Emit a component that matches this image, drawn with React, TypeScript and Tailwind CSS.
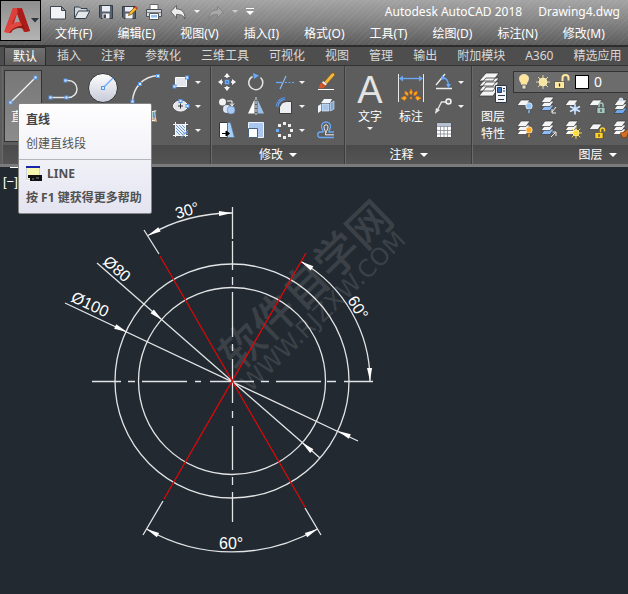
import React from "react";

type Kids = { children?: React.ReactNode };

const BLUE = "#6aa8f8";
const NODE = "#2f63b8";

function Glyph({ children, size = 18 }: Kids & { size?: number }) {
  return (
    <svg width={size} height={size} viewBox={`0 0 ${size} ${size}`} fill="none" className="block shrink-0 overflow-visible" aria-hidden="true">
      {children}
    </svg>
  );
}

function Grip({ x, y }: { x: number; y: number }) {
  return <rect x={x - 1.5} y={y - 1.5} width="3" height="3" fill="#dcecff" stroke="#5596ee" />;
}

function Caret({ wide = false }: { wide?: boolean }) {
  return wide ? (
    <svg width="8" height="4" viewBox="0 0 8 4" className="block shrink-0" aria-hidden="true">
      <path d="M0 0h8L4 4z" fill="#fff" />
    </svg>
  ) : (
    <svg width="6" height="3" viewBox="0 0 6 3" className="block shrink-0" aria-hidden="true">
      <path d="M0 0h6L3 3z" fill="#f2f2f2" />
    </svg>
  );
}

function Tool({ label, children }: Kids & { label: string }) {
  return (
    <button type="button" aria-label={label} className="block size-[18px]">
      <Glyph>{children}</Glyph>
    </button>
  );
}

function DropTool({ label, children }: Kids & { label: string }) {
  return (
    <button type="button" aria-label={label} className="flex h-[18px] w-[30px] items-center gap-[5px]">
      <Glyph>{children}</Glyph>
      <Caret />
    </button>
  );
}

function BigTool({ lines, caret = false, active = false, children }: Kids & { lines: string[]; caret?: boolean; active?: boolean }) {
  return (
    <button
      type="button"
      className={
        active
          ? "flex h-[72px] w-[38px] flex-col items-center border border-[#333] bg-linear-to-b from-[#777] to-[#8c8c8c] pt-[3px]"
          : "flex h-[72px] w-10 flex-col items-center pt-1"
      }
    >
      <Glyph size={32}>{children}</Glyph>
      <span className="mt-[2px] flex flex-col whitespace-nowrap text-center leading-[17px]">
        {lines.map((l) => (
          <span key={l}>{l}</span>
        ))}
      </span>
      {caret && (
        <span className="mt-[2px]">
          <Caret />
        </span>
      )}
    </button>
  );
}

function Panel({ title, width, children }: Kids & { title: string; width: string }) {
  return (
    <section className={`flex shrink-0 flex-col border-r border-[#3c3c3c] border-l border-l-[#6a6a6a] ${width}`}>
      <div className="flex h-[79px]">{children}</div>
      <button
        type="button"
        className="flex h-[19px] items-center justify-center gap-[6px] bg-linear-to-b from-[#4a4a4a] to-[#555] text-white"
      >
        {title}
        <Caret wide />
      </button>
    </section>
  );
}

function Sheets({ n = 3, bottom = "#fff" }: { n?: number; bottom?: string }) {
  const ys = n === 1 ? [3] : [8, 4, 0];
  return (
    <g stroke="#3a3a3a" strokeWidth=".7">
      {ys.map((y, i) => (
        <path key={y} d={`M5 ${y}h9l-4 5.500h-9z`} fill={i === 0 && n === 3 ? bottom : "#f5f5f5"} />
      ))}
    </g>
  );
}

/* Quick access toolbar */
const quick: [string, React.ReactNode][] = [
  ["新建", <path key="a" d="M.5 2.500h11l4 4v8.500h-15zM11.500 2.500v4h4" fill="#f1f3f7" stroke="#3f4650" />],
  [
    "打开",
    <g key="a" stroke="#34404a" strokeLinejoin="round">
      <path d="M.5 14V3h5l1.500 1.500h6V7" fill="#cfd6dc" />
      <path d="M.5 14.500 4.500 7h11.300l-4 7.500z" fill="#e3e8ec" />
    </g>,
  ],
  [
    "保存",
    <g key="a">
      <path d="M1.500 1.500h13v13h-11.500l-1.500-1.500z" fill="#56616f" stroke="#333b45" />
      <path d="M4 2h8v5.500H4z" fill="#e9edf2" />
      <path d="M4.500 9.500h7v5h-7z" fill="#f4f4f4" />
      <path d="M5.500 10.500h2.500v3.500h-2.500z" fill="#3d4652" />
    </g>,
  ],
  [
    "另存为",
    <g key="a">
      <path d="M.5 2.500h13v12h-11.500l-1.500-1.500z" fill="#56616f" stroke="#333b45" />
      <path d="M3 3h8v4.500H3z" fill="#e9edf2" />
      <path d="M3.500 9.500h7v5h-7z" fill="#f4f4f4" />
      <path d="m6.500 11.500 1-3 6-6 2 2-6 6z" fill="#f5b52c" stroke="#7a4a10" strokeWidth=".7" />
      <path d="m12.500 3.500 1.500-1.500 2 2-1.500 1.500z" fill="#d8452b" />
    </g>,
  ],
  [
    "打印",
    <g key="a">
      <path d="M4 .5h8v6H4z" fill="#fff" stroke="#666" />
      <path d="M.5 5.500h15v7h-15z" fill="#d6d9de" stroke="#4c5158" />
      <path d="M1 8.500h14" stroke="#7d838b" />
      <path d="M3.500 9.500h9v6h-9z" fill="#fff" stroke="#555" />
      <path d="M5 11h6v2.500H5z" fill="#8dbdf5" />
    </g>,
  ],
  ["放弃", <path key="a" d="M6.500 1.500v3.500c5 0 8.500 2.500 8.500 10-1.500-3.600-4-4.600-8.500-4.600v3.700L.8 7.800z" fill="#ececec" stroke="#4d4d4d" strokeWidth=".8" />],
];

function QuickBar() {
  return (
    <div className="flex items-center gap-2">
      {quick.map(([label, art]) => (
        <button key={label} type="button" aria-label={label} className="block">
          <Glyph size={16}>{art}</Glyph>
        </button>
      ))}
      <button type="button" aria-label="放弃列表" className="block"><Caret /></button>
      <button type="button" aria-label="重做" className="block">
        <Glyph size={16}>
          <path d="M9.500 2.500v3.300c-5 0-8.500 2.200-8.500 9 1.500-3.600 4-4.300 8.500-4.300v3.200l5.700-5.500z" fill="#a8a8a8" stroke="#7b7b7b" strokeWidth=".8" />
        </Glyph>
      </button>
      <button type="button" aria-label="重做列表" className="opacity-60"><Caret /></button>
      <button type="button" aria-label="自定义" className="flex flex-col gap-[2px]">
        <span className="h-px w-2 bg-white" />
        <Caret wide />
      </button>
    </div>
  );
}

const menus = ["文件(F)", "编辑(E)", "视图(V)", "插入(I)", "格式(O)", "工具(T)", "绘图(D)", "标注(N)", "修改(M)"];
const tabs = ["默认", "插入", "注释", "参数化", "三维工具", "可视化", "视图", "管理", "输出", "附加模块", "A360", "精选应用"];

function TitleArea() {
  return (
    <header className="flex h-[45px] bg-[repeating-linear-gradient(135deg,rgba(255,255,255,0.05)_0px,rgba(255,255,255,0.05)_1px,transparent_1px,transparent_4px),linear-gradient(180deg,#a4a4a4_0%,#8a8a8a_40%,#5b5b5b_100%)]">
      <button
        type="button"
        aria-label="应用程序菜单"
        className="flex h-[41px] w-[41px] shrink-0 items-center gap-px border border-black bg-linear-to-b from-[#8e8e8e] to-[#b4b4b4] pl-[3px]"
      >
        <svg width="26" height="28" viewBox="0 0 26 28" aria-hidden="true">
          <path d="M1 24 9 1h9l8 23-6 1-3-6-7 1-3 6z" fill="#c4231f" />
          <path d="M9 1h7L9 14 5 26l-5-1z" fill="#dd403a" />
          <path d="m13 1 5 1 8 22-5 1-6-12z" fill="#a81d1a" />
          <path d="m13 7-3 9 6-1z" fill="#a0a0a0" />
          <path d="M4 25c3-5 8-7 15-7l2 4c-6-2-11-1-15 4z" fill="#8f1815" />
          <path d="M1 25c3-6 8-10 15-10l2 4c-6 0-9 2-13 7z" fill="#e0483f" />
        </svg>
        <svg width="8" height="5" viewBox="0 0 8 5" aria-hidden="true">
          <path d="M0 0h8L4 4.500z" fill="#2e3640" />
        </svg>
      </button>
      <div className="min-w-0 flex-1">
        <div className="flex h-[23px] items-center justify-between pr-2 pl-[9px]">
          <QuickBar />
          <h1 className="flex gap-4 whitespace-nowrap text-white">
            <span>Autodesk AutoCAD 2018</span>
            <span>Drawing4.dwg</span>
          </h1>
        </div>
        <nav className="flex h-[22px] items-center gap-[25px] overflow-hidden pl-[14px] whitespace-nowrap text-white">
          {menus.map((m) => (
            <button key={m} type="button">{m}</button>
          ))}
        </nav>
      </div>
    </header>
  );
}

function TabStrip() {
  return (
    <div role="tablist" className="flex h-[21px] overflow-hidden border-t-2 border-b border-t-[#2c2c2c] border-b-[#333] bg-[#4e4e4e] pl-1 whitespace-nowrap text-[#d9d9d9]">
      {tabs.map((t, i) => (
        <button
          key={t}
          type="button"
          role="tab"
          aria-selected={i === 0}
          className={
            i === 0
              ? "mr-px rounded-t-xs border border-b-0 border-[#2c2c2c] bg-linear-to-b from-[#707070] to-[#5d5d5d] px-2 text-white"
              : "px-[10px]"
          }
        >
          {t}
        </button>
      ))}
    </div>
  );
}

function DrawPanel() {
  return (
    <Panel title="绘图" width="w-[209px] ml-[2px]">
      <div className="flex gap-px pt-1 pl-px">
        <BigTool lines={["直线"]} active>
          <path d="M4 28 28.500 3.500" stroke="#f4f4f4" strokeWidth="1.300" />
          <Grip x={3.500} y={28.500} />
          <Grip x={28.500} y={3.500} />
        </BigTool>
        <BigTool lines={["多段线"]}>
          <path d="M3 23.500h18.500a8.500 8.500 0 0 0 0-17h-3" stroke="#e4e4e4" strokeWidth="1.500" />
          <Grip x={3.500} y={23.500} />
          <Grip x={19.500} y={23.500} />
          <Grip x={18.500} y={6.500} />
        </BigTool>
        <BigTool lines={["圆"]}>
          <defs>
            <linearGradient id="disc" x2="0" y2="1">
              <stop stopColor="#fff" />
              <stop offset="1" stopColor="#c5cad8" />
            </linearGradient>
          </defs>
          <circle cx="15" cy="14" r="14.500" fill="url(#disc)" stroke="#333" />
          <path d="m15 14 10-10" stroke={BLUE} strokeWidth="1.300" />
          <Grip x={15} y={14} />
        </BigTool>
        <BigTool lines={["圆弧"]}>
          <path d="M3.500 27.500C4 14 14 2 29.500 1.500" stroke="#e4e4e4" strokeWidth="1.500" />
          <Grip x={3.500} y={27.500} />
          <Grip x={11} y={10} />
          <Grip x={29} y={2} />
        </BigTool>
      </div>
      <div className="flex flex-col gap-[6px] pt-[7px] pl-[7px]">
        <DropTool label="矩形">
          <path d="M3.500 4.500h11v9h-11z" fill="#e3e6ea" stroke="#fff" />
          <Grip x={2.500} y={13.500} />
          <Grip x={15} y={4.500} />
        </DropTool>
        <DropTool label="椭圆">
          <ellipse cx="8.500" cy="9" rx="7" ry="5" fill="#e1e4e9" stroke="#fff" />
          <path d="M6 9h5M8.500 6.500v5" stroke="#333" />
          <Grip x={8.500} y={4} />
          <Grip x={15.500} y={9} />
        </DropTool>
        <DropTool label="图案填充">
          <path d="M4 4h10v10H4z" fill="#e6effc" />
          <path d="m4 4 10 10M7 4l7 7M10 4l4 4M4 7l7 7M4 10l4 4" stroke="#7799cc" />
          <path d="M1 3.500h15M1 14.500h15M3.500 1v15M13.500 1v15" stroke="#f5f5f5" />
          <path d="m9 17 7-8M11 12h5" stroke={BLUE} />
        </DropTool>
      </div>
    </Panel>
  );
}

function ModifyPanel() {
  return (
    <Panel title="修改" width="w-[134px]">
      <div className="grid h-min grid-cols-[18px_18px_30px_18px] gap-x-[11px] gap-y-[6px] pt-[7px] pl-[6px]">
        <Tool label="移动">
          <path d="M9 1v4M9 13v4M1 9h4M13 9h4" stroke="#f5f5f5" strokeWidth="1.500" />
          <path d="m9 0 3 4H6zM9 18l3-4H6zM0 9l4-3v6zM18 9l-4-3v6z" fill="#f5f5f5" />
          <path d="M7.500 7.500h3v3h-3z" fill={NODE} stroke={BLUE} strokeWidth="1.500" />
        </Tool>
        <Tool label="旋转">
          <path d="M13.500 4.500a7 7 0 1 1-8-1" stroke="#e6e6e6" strokeWidth="1.500" />
          <path d="m6 0 6 2.500L7 6z" fill={BLUE} />
        </Tool>
        <DropTool label="修剪">
          <path d="M0 9.500h6" stroke={BLUE} strokeWidth="1.300" />
          <path d="M9 9.500h9" stroke={BLUE} strokeDasharray="2 1.500" />
          <path d="M4 16 10 3" stroke="#8bbbf8" strokeWidth="1.200" />
        </DropTool>
        <Tool label="删除">
          <path d="m7 9 8-9h2.500v2.500L10 11z" fill="#f2b93a" stroke="#7b4b13" strokeWidth=".6" />
          <path d="m6 8 4 3-1.500 1.500L5 10z" fill="#eee" />
          <path d="M5 10c-3 0-1.500 3-3.500 5 3 1 6.500 0 7-2.500z" fill="#d3552a" />
          <path d="M1 16.500h16" stroke="#fff" />
        </Tool>
        <Tool label="复制">
          <circle cx="4.500" cy="5" r="3.500" fill="#f2f3f5" />
          <path d="M9 4h5v4M12 6.500 14 9l2-2.500" stroke="#fff" />
          <circle cx="9" cy="12" r="4" fill="#dce6f5" />
          <circle cx="13" cy="13" r="4" fill="#a9c8f2" stroke="#6b88b8" strokeWidth=".6" />
        </Tool>
        <Tool label="镜像">
          <path d="M7.500 2.500v14H1z" fill="#fff" />
          <path d="M10.500 2.500v14H17z" fill="#9cc0e5" />
          <path d="M9 0v18" stroke="#d9e8fb" strokeDasharray="3 1" />
        </Tool>
        <DropTool label="圆角">
          <path d="M3.500 16.500v-6c1-4 4-6 8-6h4v12z" fill="#eceef1" stroke="#3d3d3d" />
          <path d="M1 9.500C2 5 4 2 9 1.500" stroke={BLUE} strokeWidth="2.500" />
          <path d="M1 9.500C2 5 4 2 9 1.500" stroke="#284e8b" strokeWidth=".8" />
        </DropTool>
        <Tool label="分解">
          <path d="m4 6 3-4h8l-2 4zM1 9l3-2v7l-3 2z" fill="#eef5fd" />
          <path d="M5 7h7v7H5z" fill="#a5c4e6" stroke="#dcecff" strokeWidth=".7" />
          <path d="m13.500 6 3.500-2v8l-3.500 2z" fill="#7ba6d8" stroke="#dcecff" strokeWidth=".6" />
        </Tool>
        <Tool label="拉伸">
          <path d="M1.500 1.500h8v15h-8z" fill="#fff" stroke="#383838" />
          <path d="M9.500 1.500h3l4 15h-7z" fill="#a8cdf2" stroke="#506a8e" strokeWidth=".7" />
          <path d="M4 12.500h6M8 10l3.500 2.500L8 15z" stroke="#000" fill="#000" />
        </Tool>
        <Tool label="缩放">
          <path d="M1.500 1.500h15v15h-15z" fill="#a9c7ef" stroke="#eaf3ff" />
          <path d="M1.500 7.500h9v9h-9z" fill="#fff" stroke="#46607f" />
        </Tool>
        <DropTool label="阵列">
          {[[7, 1], [12, 3], [14, 8], [12, 13], [7, 15], [2, 13], [0, 8], [2, 3]].map(([x, y], i) => (
            <rect key={i} x={x} y={y} width="3" height="3" fill={i === 6 ? BLUE : "#eee"} />
          ))}
        </DropTool>
        <Tool label="偏移">
          <path d="M17 16.500H3.500a2.500 2.500 0 0 1 0-5.500H6c.5-2-1.500-3-1.500-5.500a4.500 4.500 0 0 1 9 0c0 2.500-2 3.500-1.500 5.500h5" stroke={BLUE} strokeWidth="1.300" />
          <path d="M17 13.800H8.500c.8-3.300-1.500-5-1.500-8a2 2 0 0 1 4 0c0 3-2 4-1.800 6" stroke="#f1f1f1" />
        </Tool>
      </div>
    </Panel>
  );
}

function AnnotatePanel() {
  return (
    <Panel title="注释" width="w-[127px]">
      <div className="flex gap-px pt-1 pl-[4px]">
        <BigTool lines={["文字"]} caret>
          <text x="16" y="29" textAnchor="middle" fontSize="38" fontFamily="'Liberation Sans', sans-serif" fill="#e4e4e4">A</text>
        </BigTool>
        <BigTool lines={["标注"]}>
          <path d="M3.500 0v28M28.500 0v28" stroke="#e8e8e8" />
          <path d="M5 4.500h22" stroke={BLUE} strokeWidth="1.300" />
          <path d="m4 4.500 4-3v6zM28 4.500l-4-3v6z" fill={BLUE} />
          <g fill="#ffb51c" stroke="#e27312" strokeWidth=".8">
            <path d="m16 15 1.500 3.500L16 21l-1.500-2.500zM10 17l3 2v3l-3-2zM22 17l-3 2v3l3-2zM6 24l4-2 1.500 2-2 2.500zM26 24l-4-2-1.500 2 2 2.500z" />
            <circle cx="16" cy="24" r="1" />
          </g>
        </BigTool>
      </div>
      <div className="flex flex-col gap-[6px] pt-[7px] pl-[4px]">
        <DropTool label="角度">
          <path d="M1 15.500h16M1 12 10 1" stroke="#eee" strokeWidth="1.300" />
          <path d="M7 4c5 1 6.500 4 6.500 9" stroke={BLUE} strokeWidth="1.300" />
          <path d="m7 2 3 4-4 1zM11 11h5l-2.500 4z" fill={BLUE} />
        </DropTool>
        <DropTool label="引线">
          <path d="M2 14 6.500 5H11" stroke="#e6e6e6" strokeWidth="1.300" />
          <path d="m0 17 1-6 4 2z" fill="#e6e6e6" />
          <circle cx="13.500" cy="4.500" r="2.500" fill="#777" stroke="#f4f4f4" strokeWidth="1.500" />
        </DropTool>
        <Tool label="表格">
          <path d="M1.500 1.500h15v15h-15z" fill="#fff" stroke="#555" />
          <path d="M2 2h14v3H2z" fill="#b5c0d2" />
          <path d="M2 5.500h14M2 9.500h14M2 13h14M5.500 5v11M9 5v11M12.500 5v11" stroke="#868c97" strokeWidth=".8" />
        </Tool>
      </div>
    </Panel>
  );
}

function Sun({ x, y, r, bright = "#ffd83c" }: { x: number; y: number; r: number; bright?: string }) {
  return (
    <g>
      {[0, 45, 90, 135].map((a) => (
        <path key={a} d={`M${x - r - 3} ${y}h${2 * r + 6}`} transform={`rotate(${a} ${x} ${y})`} stroke={bright} strokeWidth=".9" />
      ))}
      <circle cx={x} cy={y} r={r} fill={bright} stroke="#fff5c0" strokeWidth=".7" />
    </g>
  );
}

function Lock({ x, y, open, color }: { x: number; y: number; open?: boolean; color: string }) {
  return (
    <g>
      <path d={open ? `M${x + 5.5} ${y + 5}v-3a2 2 0 0 1 4 0v1.500` : `M${x + 2} ${y + 5}v-3a2 2 0 0 1 4 0v3`} stroke={color} strokeWidth="1.500" />
      <path d={`M${x} ${y + 4.500}h8v6h-8z`} fill={color} stroke="#333" strokeWidth=".5" />
      <path d={`M${x + 4} ${y + 6}v3`} stroke="#333" />
    </g>
  );
}

function Bulb({ color }: { color: string }) {
  return (
    <g>
      <circle cx="13" cy="9" r="3.200" fill={color} stroke="#fff" strokeWidth=".7" />
      <path d="M12 12.500h2v4h-2z" fill={color} stroke="#444" strokeWidth=".5" />
    </g>
  );
}

function LayerPanel() {
  return (
    <Panel title="图层" width="w-[251px]">
      <div className="flex pt-1">
        <BigTool lines={["图层", "特性"]}>
          <g stroke="#3a3a3a" strokeWidth=".8" fill="#f5f5f5">
            <path d="M9 13h13l-6 9H2zM9 8h13l-6 9H2zM9 4h13l-6 8H2zM9-1h13l-6 8H2z" />
          </g>
          <path d="M18.500 11.500h11v17h-11z" fill="#f3f5f8" stroke="#2f3945" />
          <path d="M20.500 13.500h4v5h-4z" fill="#3d6cb5" stroke="#26406b" />
          <path d="M26 14.500h2M26 17h2M21 21.500h7M21 25.500h6" stroke="#2f3945" />
        </BigTool>
      </div>
      <div className="flex flex-1 flex-col">
        <label className="mt-[5px] flex h-[22px] items-center gap-[3px] border border-[#333] bg-[#6c6c6c] pl-[2px] text-white">
          <Glyph size={16}>
            <path d="M8 .5c3.500 0 5 2.500 4.500 5-.3 2-2 3-2 5h-5c0-2-1.700-3-2-5C3 3 4.500.5 8 .5z" fill="#ffe49a" stroke="#fff3cf" strokeWidth=".7" />
            <path d="M6 11h4v4H6z" fill="#e2dcc6" stroke="#494949" strokeWidth=".7" />
          </Glyph>
          <Glyph size={16}><Sun x={8} y={8} r={4} bright="#f8e5a4" /></Glyph>
          <Glyph size={16}>
            <path d="M8.500 8V4a3 3 0 0 1 6 0v2.500" stroke="#ffe9a0" strokeWidth="2" />
            <path d="M.5 7.500h10v7H.5z" fill="#ffe9a0" stroke="#333" strokeWidth=".6" />
            <path d="M5.500 9.500v3" stroke="#333" strokeWidth="1.300" />
          </Glyph>
          <span className="mr-[2px] ml-[2px] size-[14px] border border-black bg-white" />
          <select aria-label="图层" className="flex-1 appearance-none bg-transparent text-sm leading-5 outline-none">
            <option>0</option>
          </select>
        </label>
        <div className="mt-1 grid grid-cols-[repeat(5,18px)] gap-[6px] pl-[3px]">
          <Tool label="关闭图层"><Sheets n={1} /><Bulb color="#8fc4f5" /></Tool>
          <Tool label="隔离"><Sheets bottom="#8dbcf5" /><path d="m16 10-4 5M12 12v4h4" stroke="#eee" /></Tool>
          <Tool label="冻结">
            <Sheets n={1} />
            <circle cx="11" cy="12" r="3" fill="#5d84bd" />
            <path d="M11 6.500v11M6 9.500l10 5M16 9.500l-10 5" stroke="#d3e8ff" strokeWidth="1.500" />
          </Tool>
          <Tool label="锁定"><Sheets n={1} /><Lock x={9} y={6} color="#a3c7bd" /></Tool>
          <Tool label="置为当前"><g transform="translate(1 3)"><Sheets bottom="#6ea8ee" /></g><circle cx="9" cy="3" r="2" fill="#c8dbf3" stroke="#fff" strokeWidth=".6" /></Tool>
          <Tool label="打开图层"><Sheets /><Bulb color="#ffa827" /></Tool>
          <Tool label="取消隔离"><Sheets bottom="#8dbcf5" /><path d="m11 16 5-5M12.500 11H16v4" stroke="#eee" /></Tool>
          <Tool label="解冻"><Sheets /><Sun x={12} y={12} r={3} bright="#ffdd35" /></Tool>
          <Tool label="解锁"><Sheets n={1} /><Lock x={7} y={7} open color="#ffcf2a" /></Tool>
          <Tool label="匹配图层"><Sheets /><path d="m16 8-4 3-4 1 3 5 4-1 1-4 2-3z" fill="#d56f24" stroke="#60300c" strokeWidth=".6" /></Tool>
        </div>
      </div>
    </Panel>
  );
}

function Tooltip() {
  return (
    <aside
      role="tooltip"
      className="absolute top-[103px] left-[18px] w-[134px] rounded-xs border border-[#858585] bg-linear-to-b from-white to-[#e3e4f0] pt-1 pb-[3px] leading-6 font-bold text-[#515151]"
    >
      <p className="px-[7px] text-[#444]">直线</p>
      <p className="px-[7px] leading-[23px] font-normal">创建直线段</p>
      <hr className="mt-1 border-[#b5b5bc]" />
      <p className="flex items-center gap-[5px] px-[7px] pt-[2px]">
        <svg width="16" height="16" viewBox="0 0 16 16" aria-hidden="true">
          <path d="M0 0h14v15H0z" fill="#fff" />
          <path d="M.5 1.500h13v12H.5z" fill="#f7f7ae" stroke="#ccd0de" />
          <path d="M0 0h14v2H0z" fill="#1725ad" />
          <path d="M2 9h14v6H4V12H2z" fill="#111" />
          <path d="M6 13h2M10 12h3" stroke="#888" />
        </svg>
        LINE
      </p>
      <p className="px-[7px] whitespace-nowrap">按 F1 键获得更多帮助</p>
    </aside>
  );
}

/* Drawing space: every item is placed around the centre point */
const CX = 232;
const CY = 381;

function Arrow({ x, y, deg }: { x: number; y: number; deg: number }) {
  return <path d="M0 0-13-2.500v5z" fill="#fff" transform={`translate(${x} ${y}) rotate(${deg})`} />;
}

function Dim({ x, y, deg = 0, children }: Kids & { x: number; y: number; deg?: number }) {
  return (
    <text x={x} y={y} transform={`rotate(${deg} ${x} ${y})`} fontSize="16" fill="#fff" fontFamily="'Liberation Sans', Arial, sans-serif">
      {children}
    </text>
  );
}

function Drawing() {
  return (
    <svg viewBox="0 167 628 427" className="block h-auto w-full" fill="none" role="img" aria-label="Drawing4">
      <g fill="#3b4147" transform="rotate(-44 243 385)">
        <text x="247" y="373" fontSize="44" fontWeight="500" fontFamily="'Noto Sans CJK SC', sans-serif">软件自学网</text>
        <text x="243" y="396" fontSize="24" fontFamily="'DejaVu Sans', sans-serif">WWW.RJZXW.COM</text>
      </g>
      <g stroke="#e3e4e5" strokeWidth="1.300">
        <circle cx={CX} cy={CY} r="117" />
        <circle cx={CX} cy={CY} r="93.500" />
        <path d="M92 381.500h29M128 381.500h7M142 381.500h45M195 381.500h6M210 381.500h44M261 381.500h8M276 381.500h45M327 381.500h9M344 381.500h29" />
        <path d="M232.500 207v32M232.500 241v29M232.500 277v8M232.500 292v45M232.500 344v7M232.500 359v44M232.500 411v7M232.500 426v44M232.500 477v8M232.500 492v30" />
        <path d="M97 263 320 458M65 303 358 441" />
        <path d="m159 254-15-24M163 501l-20 34M305 508l16 27" />
        <path d="M148 235.500A168 168 0 0 1 232 213M301 261.500A138 138 0 0 1 370 381M146.500 529A171 171 0 0 0 317.500 529" />
      </g>
      <g stroke="#d80a0a" strokeWidth="1.300">
        <path d="M160 256 305 507M306 253 164 499" />
      </g>
      <Arrow x={148} y={235.500} deg={152} />
      <Arrow x={232} y={213} deg={-2} />
      <Arrow x={301} y={261.500} deg={-148} />
      <Arrow x={370} y={381} deg={88} />
      <Arrow x={146.500} y={529} deg={-152} />
      <Arrow x={317.500} y={529} deg={-28} />
      <Arrow x={162} y={320} deg={41} />
      <Arrow x={302} y={442.500} deg={-139} />
      <Arrow x={127} y={332} deg={25} />
      <Arrow x={338} y={431} deg={-155} />
      <Dim x={177} y={219} deg={-16}>30°</Dim>
      <Dim x={102} y={263} deg={41}>Ø80</Dim>
      <Dim x={70} y={301} deg={25}>Ø100</Dim>
      <Dim x={347} y={300} deg={59}>60°</Dim>
      <Dim x={219} y={549}>60°</Dim>
      <path d="M10 167.500h8" stroke="#fff" />
      <text x="3" y="186" fontSize="13" fill="#fff" fontFamily="'Liberation Sans', Arial, sans-serif">[−]</text>
    </svg>
  );
}

export default function App() {
  return (
    <div className="relative flex min-h-screen flex-col overflow-hidden bg-[#222930] text-xs font-['Noto_Sans','Noto_Sans_CJK_SC',sans-serif]">
      <TitleArea />
      <TabStrip />
      <div className="flex h-[101px] overflow-hidden border-b-[3px] border-[#7b7b7b] bg-[#5d5d5d] text-white">
        <DrawPanel />
        <ModifyPanel />
        <AnnotatePanel />
        <LayerPanel />
      </div>
      <main className="flex-1">
        <Drawing />
      </main>
      <Tooltip />
    </div>
  );
}
